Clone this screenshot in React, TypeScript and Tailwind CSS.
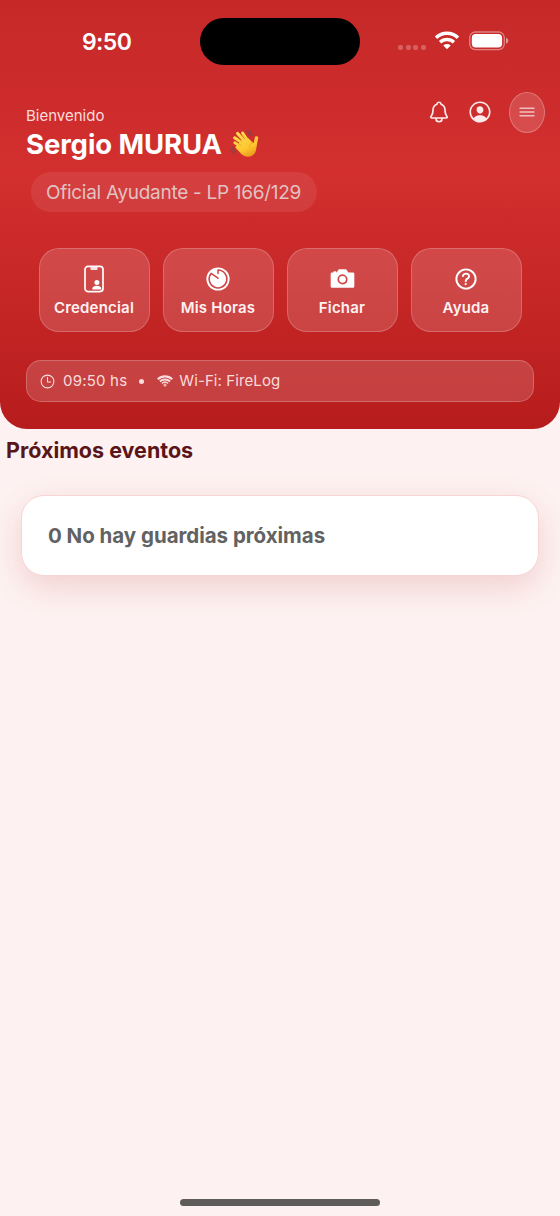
// App.tsx
import React from "react";
import {
  IoCameraSharp,
  IoHelpCircleOutline,
  IoMenuOutline,
  IoNotificationsOutline,
  IoPersonCircleOutline,
  IoTimeOutline,
} from "react-icons/io5";

const CredentialIcon = () => (
  <svg width="20" height="28" viewBox="0 0 20 28" fill="none">
    <rect x="1" y="1.4" width="18" height="25.2" rx="3" stroke="white" strokeWidth="1.7" />
    <path d="M6.5 2h7v2a.9.9 0 0 1-.9.9H7.4a.9.9 0 0 1-.9-.9z" fill="white" fillOpacity=".85" />
    <circle cx="12.9" cy="17.4" r="2.5" fill="white" />
    <path d="M8.4 24.6v-1.2c0-1.8 2-2.7 4.4-2.7s4.4.9 4.4 2.7v1.2z" fill="white" />
  </svg>
);

const TimerIcon = () => (
  <svg width="24" height="24" viewBox="0 0 24 24" fill="none">
    <circle cx="12" cy="12" r="11.6" fill="white" />
    <path
      d="M12 6.6V3.1a8.9 8.9 0 1 1-6.9 3.3L12 11.2"
      stroke="#cf4646"
      strokeWidth="1.5"
      strokeLinecap="round"
      strokeLinejoin="round"
    />
  </svg>
);

const WifiStatusIcon = () => (
  <svg width="26" height="20" viewBox="0 0 26 20" fill="none" stroke="white" strokeWidth="3.5">
    <path d="M2 6.7a16 16 0 0 1 22 0" />
    <path d="M6.1 11.3a10.2 10.2 0 0 1 13.8 0" />
    <path d="M13 18.2l-3.7-3.7a5.4 5.4 0 0 1 7.4 0z" fill="white" stroke="none" />
  </svg>
);

const WifiIcon = () => (
  <svg width="16" height="12" viewBox="0 0 16 12" fill="none" stroke="#fbdcdc">
    <path d="M.8 4.2a10.4 10.4 0 0 1 14.4 0" strokeWidth="2.2" />
    <path d="M2.9 6.5a7.5 7.5 0 0 1 10.2 0" strokeWidth="1.8" />
    <path d="M4.9 8.5a4.6 4.6 0 0 1 6.2 0" strokeWidth="1.5" />
    <circle cx="8" cy="10.1" r="1.1" strokeWidth="1" />
  </svg>
);

const BatteryIcon = () => (
  <svg width="40" height="20" viewBox="0 0 40 20" fill="none">
    <rect x=".7" y="1" width="34.6" height="17.6" rx="5.6" stroke="white" strokeOpacity=".42" strokeWidth="1.3" />
    <rect x="2.8" y="3.1" width="30.3" height="13.4" rx="3.9" fill="white" />
    <path d="M37 6.8c1.4.5 2.3 1.6 2.3 3s-.9 2.5-2.3 3z" fill="white" fillOpacity=".5" />
  </svg>
);

const WavingHand = () => (
  <svg width="30" height="30" viewBox="0 0 30 30" fill="none">
    <defs>
      <linearGradient id="skin" x1="8" y1="4" x2="20" y2="28" gradientUnits="userSpaceOnUse">
        <stop stopColor="#ffdc52" />
        <stop offset=".65" stopColor="#fdc62f" />
        <stop offset="1" stopColor="#e9981c" />
      </linearGradient>
    </defs>
    <path
      d="M17 2.2c1.5 1.2 2.4 2.6 3 4.4M19.4 1.4c1.3 1.2 2.2 2.7 2.7 4.4M2.4 18.6c.6 1.8 1.6 3.2 3.2 4.4M.9 20c.5 1.9 1.5 3.3 3 4.4"
      stroke="#7d4748"
      strokeOpacity=".8"
      strokeWidth="1.5"
      strokeLinecap="round"
    />
    <g stroke="url(#skin)" strokeLinecap="round">
      <path d="M14 15L4.6 8.8" strokeWidth="3" />
      <path d="M15.5 13L7.6 4.5" strokeWidth="3.2" />
      <path d="M18 12L12.6 4" strokeWidth="3" />
      <path d="M13 19l-8.2-5.3" strokeWidth="2.8" />
      <path d="M24.8 17.5l1.7-8.6" strokeWidth="3.4" />
    </g>
    <path
      d="M11 11.5l7-2.5 4.6 4.6 4 1.2c-.4 2.4.2 5.6-1.4 8.8-2.1 4.2-7.8 5.4-11.6 3-2.5-1.6-5.4-5-8.4-8.4z"
      fill="url(#skin)"
    />
    <path d="M12 12.8L6.8 7.9M15 10.3L11 5.6M11 16.4l-5.4-4" stroke="#d98c18" strokeWidth=".6" />
    <path d="M22.6 13.8c-2.3.8-3.5 2.5-3.2 4.8" stroke="#e5a223" strokeWidth=".7" strokeLinecap="round" />
  </svg>
);

const actions = [
  { label: "Credencial", icon: <CredentialIcon /> },
  { label: "Mis Horas", icon: <TimerIcon /> },
  { label: "Fichar", icon: <IoCameraSharp size={27} /> },
  { label: "Ayuda", icon: <IoHelpCircleOutline size={28} className="[&_path]:[stroke-width:36px]" /> },
];

const StatusBar = () => (
  <div className="flex h-[82px] justify-between pl-[82px] pr-[51px]">
    <div className="w-[118px] pt-[27px] text-[23px] leading-[30px] font-semibold tracking-[-0.6px]">9:50</div>
    <div className="mt-[18px] h-[47px] w-40 shrink-0 rounded-full bg-black" />
    <div className="flex w-[149px] justify-end pt-[31px]">
      <div className="mt-[13.5px] mr-[8px] flex gap-[2.7px]">
        <span className="size-[5px] rounded-[2px] bg-white/25" />
        <span className="size-[5px] rounded-[2px] bg-white/25" />
        <span className="size-[5px] rounded-[2px] bg-white/25" />
        <span className="size-[5px] rounded-[2px] bg-white/25" />
      </div>
      <WifiStatusIcon />
      <div className="ml-[9px]">
        <BatteryIcon />
      </div>
    </div>
  </div>
);

const Header = () => (
  <header className="h-[429px] rounded-b-[27px] bg-linear-to-b from-[#c62828] via-[#d32f2f] via-40% to-[#b71c1c] text-white">
    <StatusBar />

    {/* Greeting */}
    <div className="flex h-[90px] justify-between pl-[26px] pr-[15.5px]">
      <div className="pt-[23px]">
        <p className="text-[15px] leading-[21px] text-[#fbdddd]">Bienvenido</p>
        <div className="flex items-center">
          <h1 className="text-[27.5px] leading-[36px] font-bold whitespace-nowrap tracking-[-0.1px]">Sergio MURUA</h1>
          <div className="ml-[8px]">
            <WavingHand />
          </div>
        </div>
      </div>
      <div className="mt-2.5 flex h-10 items-center text-[#fdeaea]">
        <button><IoNotificationsOutline size={24} className="[&_path]:[stroke-width:36px]" /></button>
        <button className="ml-[16px]"><IoPersonCircleOutline size={26} /></button>
        <button className="ml-[15.5px] flex h-[41px] w-9 items-center justify-center rounded-[50%] border border-white/25 bg-white/15 text-[#f1bebe]">
          <IoMenuOutline size={20} className="[&_path]:[stroke-width:42px]" />
        </button>
      </div>
    </div>

    {/* Rank */}
    <div className="ml-[31px] flex h-10 w-[286px] items-center rounded-full bg-white/8 pt-[2px] pl-[15px]">
      <span className="text-[19px] whitespace-nowrap tracking-[-0.29px] text-[#e2c2c2]">Oficial Ayudante - LP 166/129</span>
    </div>

    {/* Quick actions */}
    <div className="mt-9 flex gap-[13px] pl-[39px] pr-[38px]">
      {actions.map((action) => (
        <button
          key={action.label}
          className="flex h-[84px] flex-1 flex-col items-center rounded-[20px] border border-white/20 bg-white/15 pt-[15px] pr-px"
        >
          <div className="flex h-[29px] items-center">{action.icon}</div>
          <span className="mt-[5px] text-[15px] leading-[20px] font-semibold whitespace-nowrap tracking-[0.2px] text-[#fff1f1]">
            {action.label}
          </span>
        </button>
      ))}
    </div>

    {/* Clock and network */}
    <div className="mx-[26px] mt-7 flex h-[42px] items-center rounded-[15px] border border-white/22 bg-white/15 pl-[12px] text-[15px] text-[#fbdcdc]">
      <IoTimeOutline size={17} />
      <span className="ml-[7px] pt-px tracking-[0.2px]">09:50 hs</span>
      <span className="ml-3 size-[5px] rounded-full bg-[#fbdcdc]" />
      <span className="ml-[13px]"><WifiIcon /></span>
      <span className="ml-[6px] pt-px tracking-[0.1px]">Wi-Fi: FireLog</span>
    </div>
  </header>
);

const App = () => {
  return (
    <div className="flex h-[1216px] w-[560px] flex-col overflow-hidden bg-[#fdf2f1] font-['Inter','Liberation_Sans',sans-serif]">
      <Header />
      <main className="flex-1">
        <h2 className="pl-[6px] pt-[7px] text-[21.5px] leading-[29px] font-bold text-[#5a1519]">Próximos eventos</h2>
        <div className="mx-[21px] mt-[30px] flex h-[81px] items-center rounded-[23px] border-[1.5px] border-[#f9d4d4] bg-white pt-0.5 pl-[26px] shadow-[0_11px_32px_rgba(183,28,28,0.16)]">
          <p className="text-[20.5px] font-bold whitespace-nowrap tracking-[-0.03px] text-[#626262]">0 No hay guardias próximas</p>
        </div>
      </main>
      <div className="mx-auto mb-[10px] h-[7px] w-[200px] rounded-full bg-[#5f5b5b]" />
    </div>
  );
};

export default App;
